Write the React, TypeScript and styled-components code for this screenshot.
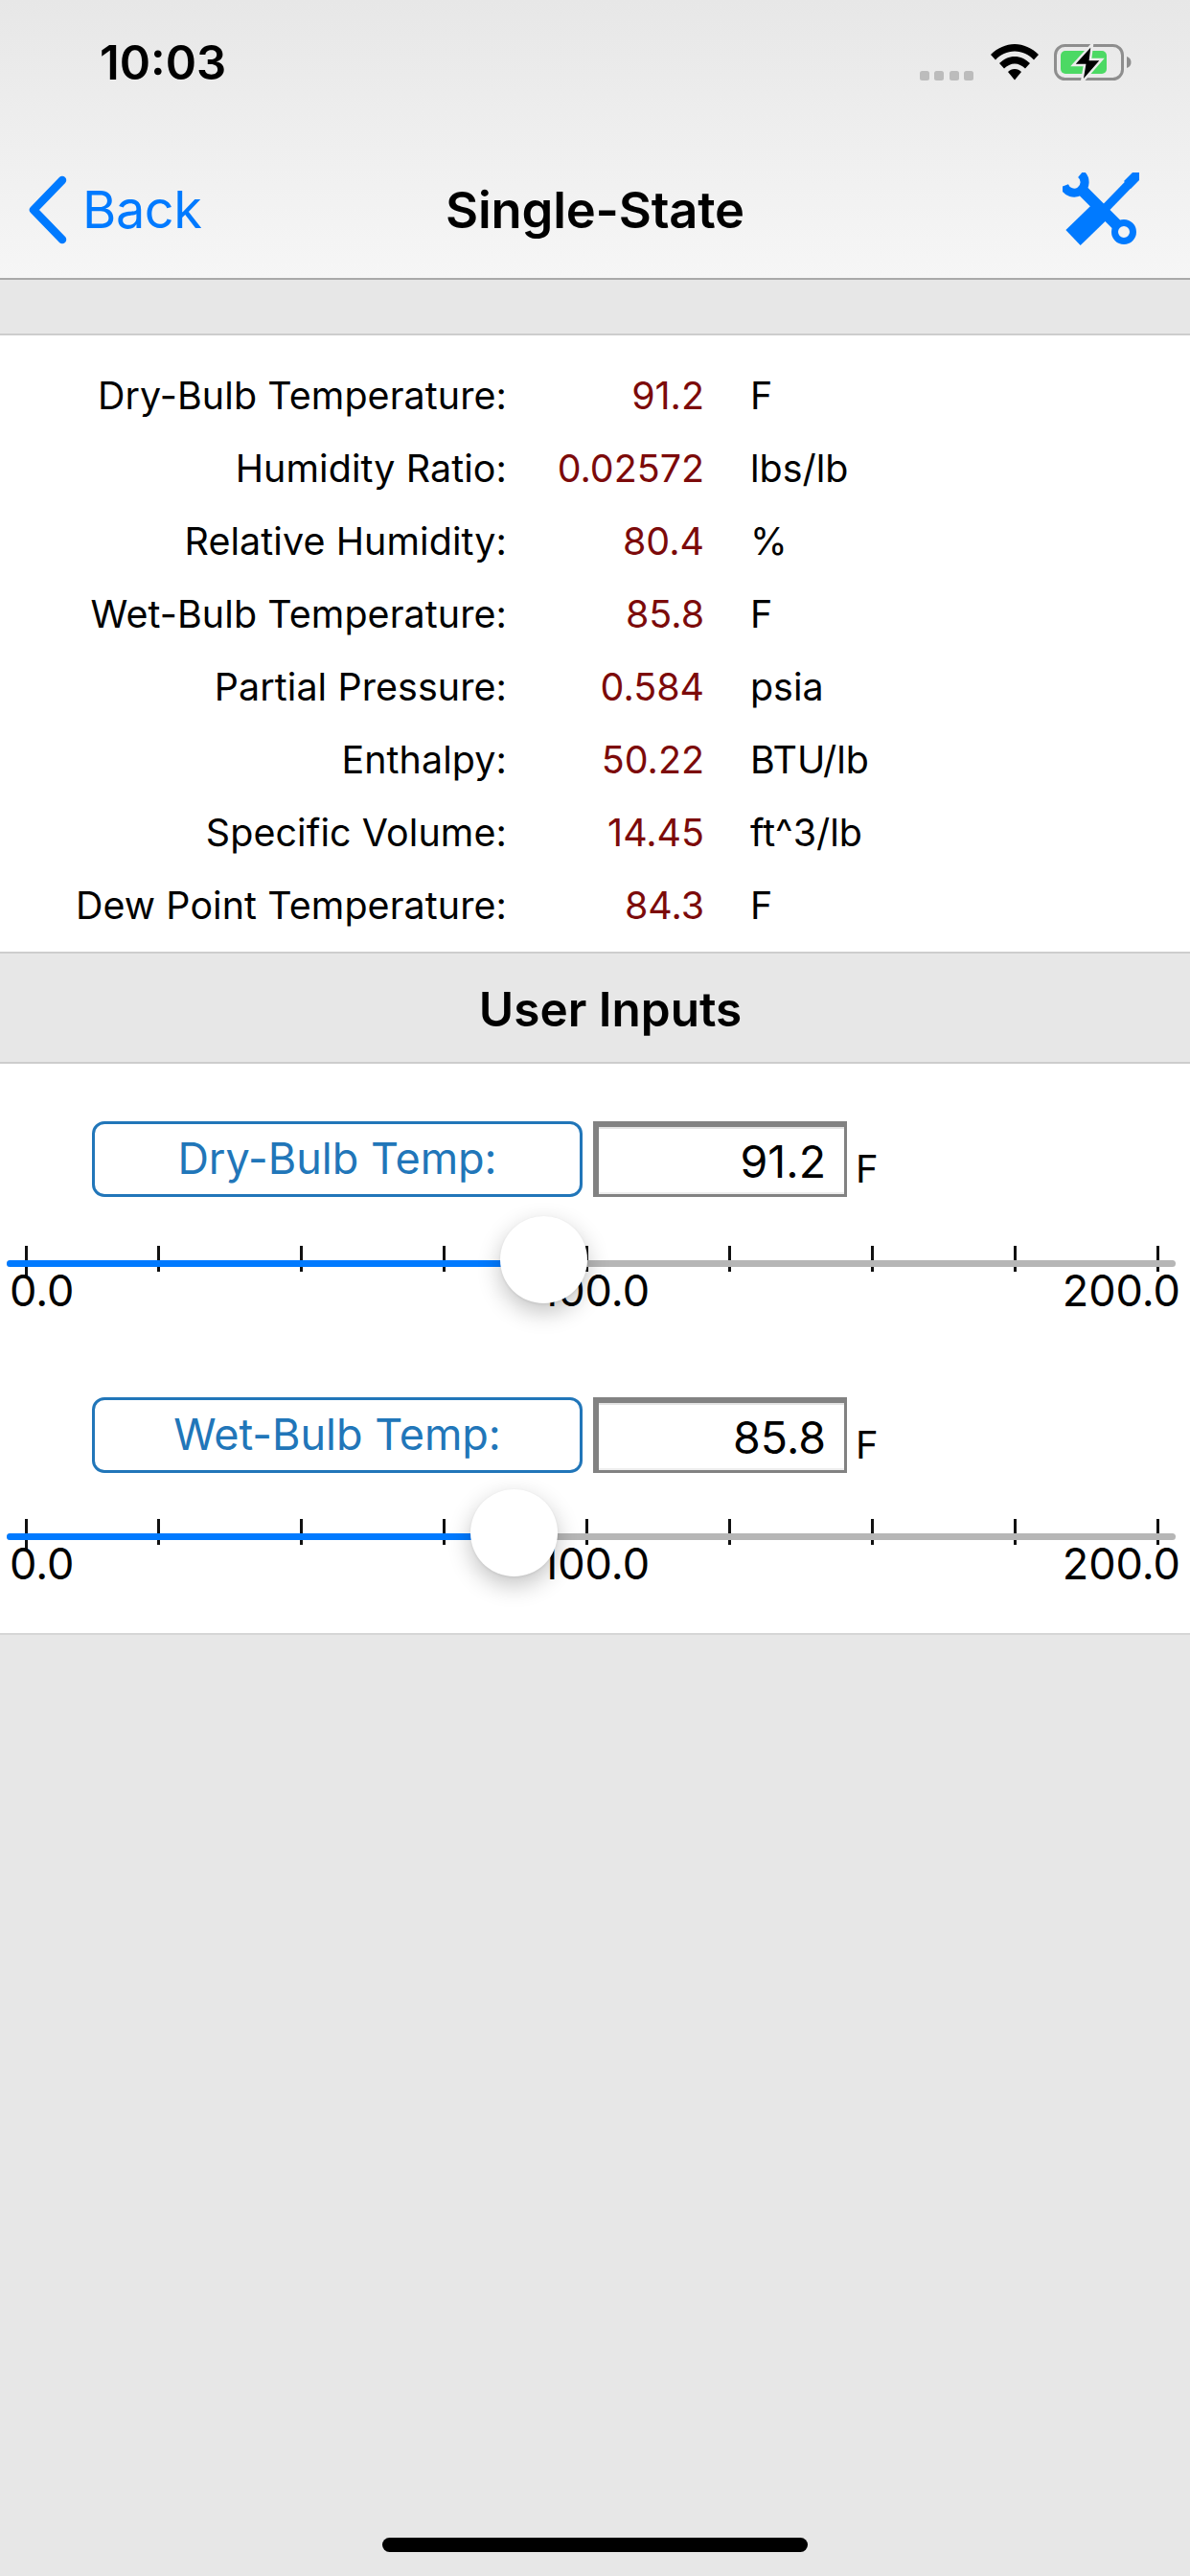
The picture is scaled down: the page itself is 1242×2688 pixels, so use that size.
import React from "react";
import styled, { createGlobalStyle } from "styled-components";

const Global = createGlobalStyle`
  html, body { margin: 0; padding: 0; background: #e7e7e7; }
  * { box-sizing: border-box; }
  body { font-family: Inter, "Liberation Sans", sans-serif; color: #000; }
`;

const Page = styled.div`
  width: 1242px;
  min-height: 2688px;
  display: flex;
  flex-direction: column;
  background: #e7e7e7;
`;
const TopBar = styled.header`
  height: 292px;
  background: linear-gradient(#e7e7e7, #f6f6f6);
  border-bottom: 2px solid #a9a9a9;
`;
const StatusBar = styled.div`
  height: 132px;
  display: flex;
  align-items: flex-start;
  padding: 37px 0 0 104px;
`;
const Clock = styled.span`
  font-size: 49px;
  font-weight: 600;
  line-height: 58px;
  letter-spacing: 0;
`;
const StatusIcons = styled.div`
  margin-left: auto;
  margin-right: 60px;
  margin-top: 9px;
  display: flex;
  align-items: flex-start;
`;
const Dots = styled.div`
  display: flex;
  gap: 5.5px;
  margin: 28px 18px 0 0;
`;
const Dot = styled.i`
  width: 10px;
  height: 10px;
  border-radius: 2.5px;
  background: #bcbcbc;
`;
const NavRow = styled.nav`
  height: 158px;
  display: grid;
  grid-template-columns: 1fr auto 1fr;
  align-items: center;
  padding-top: 16px;
`;
const BackLink = styled.div`
  display: flex;
  align-items: center;
  gap: 15px;
  padding-left: 29px;
  color: #007aff;
  font-size: 54px;
  line-height: 64px;
  letter-spacing: -0.4px;
`;
const Title = styled.div`
  font-size: 52.5px;
  font-weight: 600;
  line-height: 60px;
  letter-spacing: -0.2px;
`;
const ToolSlot = styled.div`
  display: flex;
  justify-content: flex-end;
  padding-right: 53px;
`;
const Spacer = styled.div`
  height: 58px;
  border-bottom: 2px solid #cdcdcd;
`;
const Results = styled.section`
  height: 643px;
  background: #fff;
  padding-top: 25px;
  display: grid;
  grid-template-columns: 529px 206px 1fr;
  grid-auto-rows: 76px;
  align-items: center;
  font-size: 39.4px;
`;
const ResultLabel = styled.span`
  text-align: right;
  letter-spacing: 0.1px;
`;
const ResultValue = styled.span`
  text-align: right;
  color: #7c0a0a;
`;
const ResultUnit = styled.span`
  padding-left: 48px;
`;
const SectionTitle = styled.h2`
  margin: 0;
  height: 117px;
  display: flex;
  align-items: center;
  justify-content: center;
  padding: 2px 0 0 32px;
  font-size: 49.5px;
  font-weight: 600;
  border-top: 2px solid #cdcdcd;
  border-bottom: 2px solid #cdcdcd;
  background: #e7e7e7;
`;
const Inputs = styled.section`
  height: 596px;
  background: #fff;
  border-bottom: 2px solid #d6d6d6;
  padding-top: 60px;
  display: flex;
  flex-direction: column;
  gap: 89px;
`;
const InputGroup = styled.div<{ $sliderGap: number }>`
  display: flex;
  flex-direction: column;
  gap: ${(p) => p.$sliderGap}px;
`;
const ControlRow = styled.div`
  display: flex;
  align-items: flex-end;
  padding-left: 96px;
`;
const InputButton = styled.button`
  width: 512px;
  height: 79px;
  padding: 0 0 2px;
  background: #fff;
  border: 3px solid #2176b9;
  border-radius: 13px;
  color: #2176b9;
  font-family: inherit;
  font-size: 45px;
`;
const Field = styled.div`
  width: 265px;
  height: 79px;
  margin-left: 11px;
  border-style: solid;
  border-color: #828282;
  border-width: 6px 3px 3px 6px;
  box-shadow: inset 0 2px 0 #e4e4e4, inset 0 -2px 0 #eee;
  background: #fff;
  display: flex;
  align-items: center;
  justify-content: flex-end;
  padding: 2px 19px 0 0;
  font-size: 46.5px;
`;
const FieldUnit = styled.span`
  margin-left: 9px;
  font-size: 40px;
  line-height: 48px;
  padding-bottom: 5px;
`;
const Slider = styled.div`
  position: relative;
  width: 1220px;
  margin-left: 7px;
`;
const Ticks = styled.div`
  display: flex;
  gap: 146px;
  height: 27px;
  padding-left: 18.5px;
`;
const Tick = styled.i`
  width: 3px;
  height: 27px;
  background: #111;
  &:first-child {
    height: 33px;
    margin-right: -11px;
  }
`;
const Track = styled.div`
  position: absolute;
  left: 0;
  right: 0;
  top: 15px;
  height: 7px;
  border-radius: 4px;
  overflow: hidden;
  display: flex;
  background: #b6b6b6;
`;
const TrackFill = styled.div`
  background: #007aff;
`;
const Thumb = styled.div`
  position: absolute;
  top: -31px;
  width: 91px;
  height: 91px;
  border-radius: 50%;
  background: #fff;
  box-shadow: 0 9px 24px rgba(0, 0, 0, 0.24), 0 1px 3px rgba(0, 0, 0, 0.08);
`;
const ScaleRow = styled.div`
  display: grid;
  grid-template-columns: 1fr auto 1fr;
  font-size: 45px;
  line-height: 44px;
  padding-left: 3px;
  margin: -2px -5px 0 0;
`;
const ScaleEnd = styled.span`
  text-align: right;
`;
const HomeBar = styled.div`
  width: 444px;
  height: 15px;
  margin: auto auto 25px;
  border-radius: 8px;
  background: #000;
`;

const Chevron = () => (
  <svg width="42" height="72" viewBox="0 0 42 72">
    <path d="M36 5 L6 36 L36 67" fill="none" stroke="#007aff" strokeWidth="8.5" strokeLinecap="round" strokeLinejoin="round" />
  </svg>
);

const Tools = () => (
  <svg width="80" height="78" viewBox="0 0 80 78">
    <g fill="none" stroke="#007aff">
      <path d="M11 68 L43 37" strokeWidth="22" />
      <path d="M43 39 L74 7" strokeWidth="9" />
      <path d="M18 16 L57 55" strokeWidth="12" />
      <circle cx="64" cy="62" r="9.5" strokeWidth="7" />
      <path d="M19 1.600 A11 11 0 1 1 1.700 13.800" strokeWidth="9" />
    </g>
    <path d="M64 9 L73 0 H80 V8 L71 17Z" fill="#007aff" />
  </svg>
);

const Wifi = () => (
  <svg width="50" height="38" viewBox="0 0 50 38">
    <path d="M25 0 C34 0 43 4 50 11 L45 16.5 C40 11 33 7.5 25 7.5 C17 7.5 10 11 5 16.5 L0 11 C7 4 16 0 25 0Z" />
    <path d="M25 13 C31 13 36 15.5 41 20 L36 25.5 C33 22.5 29 20.5 25 20.5 C21 20.5 17 22.5 14 25.5 L9 20 C14 15.5 19 13 25 13Z" />
    <path d="M25 26 C28 26 30 27 32 29 L25 37.5 L18 29 C20 27 22 26 25 26Z" />
  </svg>
);

const Battery = () => (
  <svg width="82" height="40" viewBox="0 0 82 40" style={{ marginLeft: 16 }}>
    <rect x="1.5" y="1.5" width="70" height="35" rx="10" fill="none" stroke="#8e8e8e" strokeWidth="3" />
    <rect x="7" y="7" width="48" height="24" rx="5" fill="#4cd964" />
    <path d="M76 13 C79 14 80.500 16 80.500 19 C80.500 22 79 24 76 25Z" fill="#8e8e8e" />
    <path d="M40 0 L20 22 H32 L29 40 L50 16 H38Z" fill="#000" stroke="#ececec" strokeWidth="2.500" />
  </svg>
);

const results = [
  ["Dry-Bulb Temperature:", "91.2", "F"],
  ["Humidity Ratio:", "0.02572", "lbs/lb"],
  ["Relative Humidity:", "80.4", "%"],
  ["Wet-Bulb Temperature:", "85.8", "F"],
  ["Partial Pressure:", "0.584", "psia"],
  ["Enthalpy:", "50.22", "BTU/lb"],
  ["Specific Volume:", "14.45", "ft^3/lb"],
  ["Dew Point Temperature:", "84.3", "F"],
];

const inputs = [
  { label: "Dry-Bulb Temp:", value: 91.2, sliderGap: 51 },
  { label: "Wet-Bulb Temp:", value: 85.8, sliderGap: 48 },
];

const SLIDER_WIDTH = 1220;
const THUMB = 91;

export default function App() {
  return (
    <Page>
      <Global />
      <TopBar>
        <StatusBar>
          <Clock>10:03</Clock>
          <StatusIcons>
            <Dots>
              <Dot />
              <Dot />
              <Dot />
              <Dot />
            </Dots>
            <Wifi />
            <Battery />
          </StatusIcons>
        </StatusBar>
        <NavRow>
          <BackLink>
            <Chevron />
            <span>Back</span>
          </BackLink>
          <Title>Single-State</Title>
          <ToolSlot>
            <Tools />
          </ToolSlot>
        </NavRow>
      </TopBar>
      <Spacer />
      <Results>
        {results.map(([label, value, unit]) => (
          <React.Fragment key={label}>
            <ResultLabel>{label}</ResultLabel>
            <ResultValue>{value}</ResultValue>
            <ResultUnit>{unit}</ResultUnit>
          </React.Fragment>
        ))}
      </Results>
      <SectionTitle>User Inputs</SectionTitle>
      <Inputs>
        {inputs.map(({ label, value, sliderGap }) => {
          const left = (value / 200) * (SLIDER_WIDTH - THUMB);
          return (
            <InputGroup key={label} $sliderGap={sliderGap}>
              <ControlRow>
                <InputButton>{label}</InputButton>
                <Field>{value.toFixed(1)}</Field>
                <FieldUnit>F</FieldUnit>
              </ControlRow>
              <div>
                <Slider>
                  <Ticks>
                    {Array.from({ length: 9 }, (_, i) => (
                      <Tick key={i} />
                    ))}
                  </Ticks>
                  <Track>
                    <TrackFill style={{ width: left + THUMB / 2 }} />
                  </Track>
                  <ScaleRow>
                    <span>0.0</span>
                    <span>100.0</span>
                    <ScaleEnd>200.0</ScaleEnd>
                  </ScaleRow>
                  <Thumb style={{ left }} />
                </Slider>
              </div>
            </InputGroup>
          );
        })}
      </Inputs>
      <HomeBar />
    </Page>
  );
}
